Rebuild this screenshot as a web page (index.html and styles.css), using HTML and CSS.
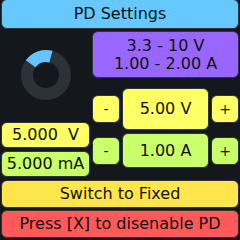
FILE: index.html
```html
<!DOCTYPE html>
<html>
<head>
<meta charset="utf-8">
<link rel="stylesheet" href="styles.css">
</head>
<body>
<div class="screen">
  <div class="box header">PD Settings</div>
  <div class="middle">
    <div class="left">
      <div class="gauge">
        <svg width="52" height="52" viewBox="0 0 52 52">
          <circle cx="26" cy="26" r="19" fill="none" stroke="#2c3235" stroke-width="12"/>
          <path d="M 10.63 14.83 A 19 19 0 0 1 30.92 7.65" fill="none" stroke="#66c4ff" stroke-width="12"/>
        </svg>
      </div>
      <div class="box val yellow">5.000&nbsp;&nbsp;V</div>
      <div class="box val green">5.000 mA</div>
    </div>
    <div class="right">
      <div class="box range">3.3 - 10 V<br>1.00 - 2.00 A</div>
      <div class="row row-v">
        <div class="box btn yellow">-</div>
        <div class="box setv yellow">5.00 V</div>
        <div class="box btn yellow">+</div>
      </div>
      <div class="row row-a">
        <div class="box btn green">-</div>
        <div class="box seta green">1.00 A</div>
        <div class="box btn green">+</div>
      </div>
    </div>
  </div>
  <div class="box bar fixed">Switch to Fixed</div>
  <div class="box bar off">Press [X] to disenable PD</div>
</div>
</body>
</html>
```
FILE: styles.css
```css
html, body {
  margin: 0;
  padding: 0;
  background: #14171b;
}
.screen {
  width: 240px;
  height: 240px;
  box-sizing: border-box;
  padding: 0 1px;
  display: flex;
  flex-direction: column;
  gap: 2px;
  font-family: "DejaVu Sans", sans-serif;
  font-size: 16px;
  color: #111;
}
.box {
  box-sizing: border-box;
  border: 1px solid #2e3438;
  border-radius: 6px;
  display: flex;
  align-items: center;
  justify-content: center;
  text-align: center;
  line-height: 18px;
}
.header {
  height: 30px;
  background: #66c8ff;
  margin-top: -1px;
}
.middle {
  display: flex;
  gap: 2px;
  height: 147px;
}
.left {
  width: 89px;
  display: flex;
  flex-direction: column;
  gap: 3px;
}
.gauge {
  height: 88px;
  display: flex;
  align-items: center;
  justify-content: center;
}
.val { height: 26px; }
.yellow { background: #ffff66; }
.green { background: #c8ff6a; }
.right {
  flex: 1;
  display: flex;
  flex-direction: column;
}
.range {
  height: 47px;
  background: #9966ff;
  margin-bottom: 10px;
}
.row {
  display: flex;
  align-items: center;
  gap: 2px;
}
.row-v { height: 42px; margin-bottom: 3px; }
.row-a { height: 35px; }
.btn { width: 28px; height: 28px; font-size: 14px; }
.setv, .seta { flex: 1; height: 100%; }
.bar { height: 28px; }
.fixed { background: #ffe64d; }
.off { background: #ff5a5a; }
```
